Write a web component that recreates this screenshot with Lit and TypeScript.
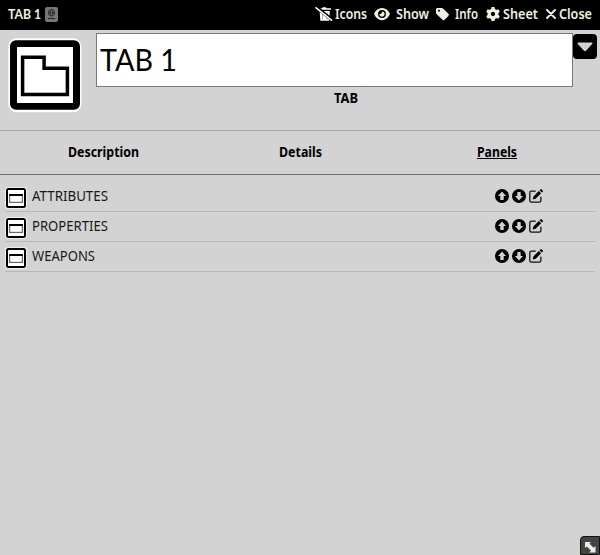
import { LitElement, html, css, svg } from "lit";
import { customElement, property } from "lit/decorators.js";

/* A line of text condensed to a fixed advance width. */
@customElement("fit-text")
class FitText extends LitElement {
  @property() text = "";
  @property({ type: Number }) width = 10;
  @property({ type: Number }) height = 20;
  @property({ type: Number }) base = 15;
  static styles = css`
    :host { display: block; flex: none; }
    svg { display: block; overflow: visible; }
    text { fill: currentColor; }
  `;
  render() {
    return html`<svg width=${this.width} height=${this.height}>
      ${svg`<text x="0" y=${this.base} textLength=${this.width} lengthAdjust="spacingAndGlyphs">${this.text}</text>`}
    </svg>`;
  }
}

const trash = html`<svg width="18" height="16" viewBox="0 0 18 16">
  <path fill="#fff" d="M4 2.2h3l.8-1h3l.8 1H16v1.6H4zM4.6 5h10.2l-.7 9.8H5.4z"/>
  <path stroke="#aaa" d="M7.5 6.5v7M12 6.5v7"/>
  <path stroke="#000" stroke-width="3.4" d="M1 .8l16 13.2"/>
  <path stroke="#fff" stroke-width="1.7" d="M.5 1.4l16.5 13.2"/>
</svg>`;
const eye = html`<svg width="16" height="14" viewBox="0 0 576 512">
  <path fill="currentColor" d="M288 32c-81 0-146 37-193 81C48 157 17 208 2 244c-3 8-3 16 0 24 15 36 46 88 93 131 47 44 112 81 193 81s146-37 193-81c47-43 78-95 93-131 3-8 3-16 0-24-15-36-46-87-93-131-47-44-112-81-193-81zM144 256a144 144 0 1 1 288 0 144 144 0 1 1-288 0zm144-64c0 35-29 64-64 64-7 0-14-1-20-3-6-2-12 2-12 7 0 7 1 14 3 21 14 51 67 82 118 68s82-67 68-118c-11-41-47-69-87-71-6 0-9 6-7 12 1 6 1 13 1 20z"/>
</svg>`;
const tag = html`<svg width="13" height="14" viewBox="0 0 13 14">
  <path fill="currentColor" fill-rule="evenodd" d="M0 2.3C0 1.500.6.9 1.400.9h4.500c.4 0 .8.200 1.100.5l5.400 5.400c.6.6.6 1.500 0 2.100l-3.800 3.800c-.6.6-1.500.6-2.100 0L1 7.500C.4 7.100 0 6.700 0 6.100zM3 2.800a1 1 0 1 0 0 2 1 1 0 0 0 0-2z"/>
</svg>`;
const gear = html`<svg width="14" height="14" viewBox="0 0 14 14">
  <g fill="currentColor"><path d="M5.500 0h3l.5 3H5zM5.500 14h3l.5-3H5z"/>
  <path d="M5.500 0h3l.5 3H5zM5.500 14h3l.5-3H5z" transform="rotate(60 7 7)"/>
  <path d="M5.500 0h3l.5 3H5zM5.500 14h3l.5-3H5z" transform="rotate(120 7 7)"/></g>
  <circle cx="7" cy="7" r="3.800" fill="none" stroke="currentColor" stroke-width="3.300"/>
</svg>`;
const cross = html`<svg width="10" height="10" viewBox="0 0 10 10">
  <path stroke="currentColor" stroke-width="1.900" stroke-linecap="round" d="M1 1l8 8M9 1L1 9"/>
</svg>`;
const passport = html`<svg width="13" height="15" viewBox="0 0 13 15">
  <rect width="13" height="15" rx="2" fill="#77776f"/>
  <g fill="none" stroke="#20201e" stroke-width=".8"><circle cx="6.500" cy="5.800" r="3.200"/>
  <ellipse cx="6.500" cy="5.800" rx="1.400" ry="3.200"/><path d="M3.300 5.800h6.400"/>
  <path stroke-width="1" d="M3 11.500h7"/></g>
</svg>`;
const tabIcon = html`<svg width="74" height="75" viewBox="0 0 74 75">
  <rect x=".3" y=".3" width="73" height="74" rx="8" fill="#fff"/>
  <path fill="#000" fill-rule="evenodd" d="M8 2.300h58a6 6 0 0 1 6 6v57.400a6 6 0 0 1-6 6H8a6 6 0 0 1-6-6V8.300a6 6 0 0 1 6-6zM9 9v56h56V9z"/>
  <path fill="none" stroke="#000" stroke-width="3.500" d="M14.600 19.200h21.500v11h23.300v26.300H14.600z"/>
</svg>`;
const panelIcon = html`<svg width="22" height="22" viewBox="0 0 22 22">
  <rect width="22" height="22" rx="3" fill="#eee"/>
  <rect x="2" y="2" width="18" height="18" rx="1.500" fill="#fff" stroke="#000" stroke-width="2"/>
  <rect x="4.600" y="7.800" width="12.800" height="7.600" fill="#fff" stroke="#666" stroke-width="1.200"/>
  <path fill="#000" d="M4.300 7h13.400v2H4.300z"/>
</svg>`;
const arrow = svg`<circle cx="7" cy="7" r="7" fill="#000"/>
  <path fill="#d3d3d3" d="M7 2.600l4 4.300H8.700v3.500c0 .5-.3.700-.7.700H6c-.4 0-.7-.3-.7-.7V6.900H3z"/>`;
const up = html`<svg width="14" height="14" viewBox="0 0 14 14">${arrow}</svg>`;
const down = html`<svg class="flip" width="14" height="14" viewBox="0 0 14 14">${arrow}</svg>`;
const edit = html`<svg width="14" height="14" viewBox="0 0 14 14">
  <path fill="none" stroke="#111" stroke-width="1.300" stroke-linecap="round" d="M6.300 2.100H2.400C1.400 2.100.8 2.700.8 3.700v7.900c0 1 .6 1.600 1.600 1.600h7.900c1 0 1.600-.6 1.600-1.600V8.200"/>
  <path fill="#000" d="M9.800 2l2.300 2.300-5.400 5.400-3 .7.700-3zM10.500 1.300l.8-.8c.5-.5 1-.5 1.500 0l.8.800c.5.5.5 1 0 1.500l-.8.800z"/>
</svg>`;

@customElement("app-root")
class AppRoot extends LitElement {
  static styles = css`
    :host { display: flex; flex-direction: column; position: relative; width: 600px; height: 555px;
      background: #d3d3d3; color: #000; overflow: hidden; font: 14px "Noto Sans", sans-serif; }
    svg { display: block; flex: none; }
    .bar { display: flex; align-items: center; height: 30px; background: #000; color: #f0f0e0;
      padding: 0 8px; box-sizing: border-box; font-weight: 600; }
    .bar fit-text { margin-bottom: 2px; }
    .bar svg { margin-bottom: 2px; }
    .title { display: flex; align-items: center; gap: 4px; margin-right: auto; }
    .lato { font-family: Lato, sans-serif; font-weight: 700; }
    .action { display: flex; align-items: center; }
    .head { display: flex; align-items: flex-start; height: 101px; box-sizing: border-box;
      border-bottom: 1px solid #a9a9a9; }
    .portrait { margin: 8px 14px 0 8px; }
    .name { width: 477px; padding-top: 3px; }
    .field { box-sizing: border-box; height: 54px; background: #fff; border: 1px solid #7a7971;
      padding-left: 3px; font: 30px Lato, sans-serif; }
    .kind { display: flex; justify-content: center; padding-left: 23px; font-weight: 700; }
    .drop { display: flex; align-items: center; justify-content: center; width: 24px; height: 25px;
      margin-top: 4px; border-radius: 4px; background: #000; }
    .tabs { display: grid; grid-template-columns: 207px 186px 207px; justify-items: center; align-items: start;
      height: 44px; padding-top: 13px; box-sizing: border-box; border-bottom: 1px solid #707070; font-weight: 700; }
    .on { border-bottom: 1px solid #000; }
    .list { padding: 7px 5px 0; }
    .row { display: flex; align-items: center; height: 30px; box-sizing: border-box; padding-bottom: 2px;
      border-bottom: 1px solid #b8b8b8; color: #191813; }
    .row .panel { margin: 4px 5px 0 0; }
    .tools { display: flex; gap: 3px; margin: 0 52px 0 auto; }
    .flip { transform: rotate(180deg); }
    .grip { position: absolute; right: 0; bottom: 0; width: 20px; height: 19px; box-sizing: border-box;
      border: 1px solid #111; border-radius: 4px 0 0 0; background: #444; padding: 3px; }
  `;

  private action(icon: unknown, label: string, width: number, gap: number, after: number) {
    return html`<div class="action" style="gap:${gap}px;margin-right:${after}px">
      ${icon}<fit-text text=${label} width=${width}></fit-text></div>`;
  }

  private row(label: string, width: number) {
    return html`<div class="row"><div class="panel">${panelIcon}</div>
      <fit-text text=${label} width=${width}></fit-text>
      <div class="tools">${up}${down}${edit}</div></div>`;
  }

  render() {
    return html`
      <div class="bar">
        <div class="title"><fit-text class="lato" text="TAB 1" width="33"></fit-text>${passport}</div>
        ${this.action(trash, "Icons", 32, 2, 7)}
        ${this.action(eye, "Show", 33, 6, 7)}
        ${this.action(tag, "Info", 23, 6, 8)}
        ${this.action(gear, "Sheet", 35, 3, 8)}
        ${this.action(cross, "Close", 33, 3, 0)}
      </div>
      <div class="head">
        <div class="portrait">${tabIcon}</div>
        <div class="name">
          <div class="field"><fit-text text="TAB 1" width="77" height="52" base="37"></fit-text></div>
          <div class="kind"><fit-text text="TAB" width="24" height="22" base="16"></fit-text></div>
        </div>
        <div class="drop"><svg width="16" height="10" viewBox="0 0 16 10"><path fill="#d3d3d3" d="M1.500.5h13c1 0 1.300.8.7 1.500L9 8.800c-.6.6-1.400.6-2 0L.8 2C.2 1.300.5.5 1.500.5z"/></svg></div>
      </div>
      <div class="tabs">
        <fit-text text="Description" width="71" height="18" base="13"></fit-text>
        <fit-text text="Details" width="43" height="18" base="13"></fit-text>
        <div class="on"><fit-text text="Panels" width="40" height="14" base="13"></fit-text></div>
      </div>
      <div class="list">
        ${this.row("ATTRIBUTES", 76)}${this.row("PROPERTIES", 76)}${this.row("WEAPONS", 63)}
      </div>
      <div class="grip"><svg width="13" height="13" viewBox="0 0 13 13">
        <path fill="#f0f0e0" d="M1 2h6L5.400 3.600l4.200 4.200L11.500 6v6.500H5.300L7 10.600 2.800 6.400 1 8z"/></svg></div>
    `;
  }
}
